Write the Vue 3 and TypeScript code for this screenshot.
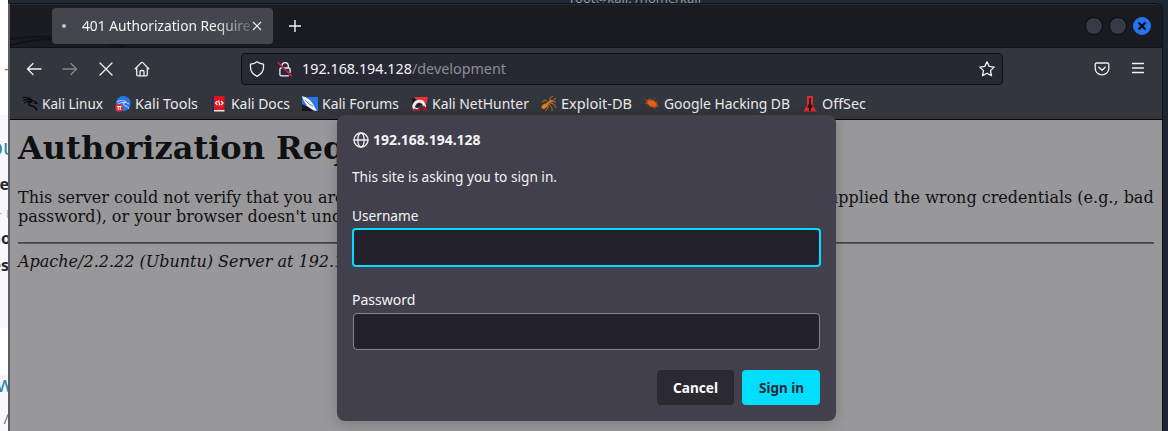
<script setup lang="ts">
interface Bookmark { id: string; label: string; width: number; gap: number }
const bookmarks: Bookmark[] = [
  { id: 'dragon', label: 'Kali Linux', width: 61, gap: 12 },
  { id: 'tools', label: 'Kali Tools', width: 63, gap: 12.5 },
  { id: 'docs', label: 'Kali Docs', width: 59, gap: 12.5 },
  { id: 'forums', label: 'Kali Forums', width: 77, gap: 12.5 },
  { id: 'hunter', label: 'Kali NetHunter', width: 97, gap: 12 },
  { id: 'exploit', label: 'Exploit-DB', width: 71, gap: 12 },
  { id: 'google', label: 'Google Hacking DB', width: 126, gap: 12 },
  { id: 'offsec', label: 'OffSec', width: 44, gap: 0 },
]
const fragments = [
  { text: '‑', top: 58, cls: 'code' },
  { text: 'ou', top: 137, cls: 'link' },
  { text: 'me', top: 174, cls: 'strong' },
  { text: '- r', top: 202, cls: 'pale' },
  { text: 'no', top: 228, cls: 'strong clipped' },
  { text: 'es', top: 255, cls: 'strong' },
  { text: 'w', top: 374, cls: 'link single' },
  { text: '- /', top: 408, cls: 'code' },
]
</script>

<template>
  <div class="desktop">
    <div class="behind">
      <div class="band first"></div>
      <div class="band second"></div>
      <span v-for="f in fragments" :key="f.top" class="frag" :class="f.cls" :style="{ top: f.top + 'px' }">{{ f.text }}</span>
    </div>
    <div class="topline"></div>
    <div class="terminal">root@kali: /home/kali</div>
    <div class="window">
      <header class="tabs">
        <svg class="watermark" width="130" height="40" viewBox="0 0 130 40" fill="none"><path d="M0 32C35 27 73 30 116 40M0 38C25 32 45 31 60 34M45 31l6 6" stroke="#111317" stroke-width="2" /></svg>
        <div class="tab">
          <i class="dot"></i>
          <svg class="tab-title" width="169" height="24"><text x="0" y="17" textLength="177" lengthAdjust="spacingAndGlyphs">401 Authorization Required</text></svg>
          <svg class="tab-close" width="10" height="10" viewBox="0 0 10 10"><path d="M1 1l8 8M9 1L1 9" /></svg>
        </div>
        <svg class="plus" width="12" height="12" viewBox="0 0 12 12"><path d="M6 0v12M0 6h12" /></svg>
        <div class="controls">
          <i></i><i></i>
          <i class="close"><svg width="10" height="10" viewBox="0 0 10 10"><path d="M1.500 1.500l7 7M8.500 1.500l-7 7" /></svg></i>
        </div>
      </header>
      <nav class="toolbar">
        <svg class="ic back" width="16" height="16" viewBox="0 0 16 16"><path d="M15 8H1.500M7 2.500L1.500 8 7 13.500" /></svg>
        <svg class="ic forward" width="16" height="16" viewBox="0 0 16 16"><path d="M1 8h13.500M9 2.500L14.500 8 9 13.500" /></svg>
        <svg class="ic stop" width="16" height="16" viewBox="0 0 16 16"><path d="M2 2l12 12M14 2L2 14" /></svg>
        <svg class="ic home" width="16" height="16" viewBox="0 0 16 16"><path d="M1.200 7.700L7.300 1.600q.7-.6 1.400 0l6.100 6.100M2.700 6.500v7q0 1.300 1.300 1.300h8q1.300 0 1.300-1.300v-7M6 14.800v-4q0-1.300 1.300-1.300h1.400q1.300 0 1.300 1.300v4" /></svg>
        <div class="url">
          <svg class="ic shield" width="16" height="16" viewBox="0 0 16 16"><path d="M8 .8c2 1.500 4.200 2.100 6.500 2.300v3.200c0 4-2.300 7-6.500 9-4.200-2-6.500-5-6.500-9V3.100C3.800 2.900 6 2.300 8 .8z" /></svg>
          <svg class="ic lock" width="16" height="16" viewBox="0 0 16 16"><path d="M5 4.300a3.200 3.200 0 0 1 6.300 0V7M7.500 7h4.300q1.300 0 1.300 1.300v3M11.500 14.800H4.200q-1.300 0-1.300-1.300V8.300Q2.900 7 4.200 7" /><path class="slash" d="M1 1.500l13.500 13.500" /></svg>
          <svg class="address" width="210" height="24"><text x="0" y="17" textLength="204" lengthAdjust="spacingAndGlyphs">192.168.194.128<tspan class="dim">/development</tspan></text></svg>
          <svg class="ic star" width="16" height="16" viewBox="0 0 16 16"><path d="M8 .8l2.200 4.600 5 .7-3.700 3.500 1 5L8 12.200l-4.500 2.400 1-5L.8 6.100l5-.7z" /></svg>
        </div>
        <svg class="ic pocket" width="16" height="16" viewBox="0 0 16 16"><path d="M2.500 2h11q1.300 0 1.300 1.300v4.200a6.800 6.300 0 0 1-13.600 0V3.300Q1.200 2 2.500 2zM4.800 6.300L8 9.300l3.200-3" /></svg>
        <svg class="ic menu" width="14" height="14" viewBox="0 0 14 14"><path d="M1.500 1.500h11M1.500 6h11M1.500 10.500h11" /></svg>
      </nav>
      <nav class="bookmarks">
        <a v-for="b in bookmarks" :key="b.id" :style="{ marginRight: b.gap + 'px' }">
          <svg class="favicon" width="16" height="16" viewBox="0 0 16 16">
            <g v-if="b.id === 'dragon'" fill="none" stroke="#08090b"><path d="M.5 1.500C5 1 8 2 10.500 4.500M1 4.500c3-1.200 6-1 9 .5M2 7c2-1.300 5-2 8-1M10 4.500l4 1.500 1 1.500-3-.5" stroke-width="1.200" /><path d="M10 6C6 5.500 5.500 8 8 9.500c4 .5 6 2 7 5" stroke-width="1.600" /></g>
            <g v-else-if="b.id === 'tools'"><circle cx="8.300" cy="7.500" r="7.400" fill="#2878ed" /><path d="M2 6c3-2 6-2 9 0M3 8c3-1.800 5-1.500 8-1.500M10 6l4 2M10 7c-3 0-2 2.500 1 3 2 .5 2.500 2 2.500 3" fill="none" stroke="#c4dcfb" stroke-width="1" /><circle cx="4.200" cy="11.800" r="4" fill="#e52a32" /><path d="M2 10.500h4.500M3.200 11v3M5.300 11v3" stroke="#fff" /></g>
            <g v-else-if="b.id === 'docs'"><path fill="#252b60" d="M1 0h2v16H1z" /><path fill="#db151b" d="M3 0h10.500v14H3z" /><path fill="#e7e7e9" d="M3 14h10.500v1.500H3z" /><path d="M6.500 5L4.500 7l2 2M10 5l2 2-2 2M7.700 4.500l1 5" fill="none" stroke="#fff" stroke-width="1.200" /></g>
            <g v-else-if="b.id === 'forums'"><path fill="#2678ed" d="M0 1h16v14H0z" /><path fill="#15171b" d="M0 8l6 3 6 4H0z" /><path d="M0 0l3 1 5 3 3 4 4 7-4-1-6-4-3-5z" fill="#f1f1f1" /><path d="M3 4l4 4 4 2" fill="none" stroke="#888" /></g>
            <g v-else-if="b.id === 'hunter'"><path d="M2 1h14l-3 12L6 5z" fill="#ef3138" /><path d="M0 2h3l-2 7z" fill="#111318" /><path d="M7 13c-4 1.500-6-1-5-4 2-5 8-5 9.500-1.500l1.500 4" fill="none" stroke="#ededed" stroke-width="2.800" /><path d="M2 13q3 3 6-.5M11 10l4 5" fill="none" stroke="#b80f35" stroke-width="2.200" /><path d="M5 11q2-4 5-2" fill="none" stroke="#17181b" stroke-width="1.500" /></g>
            <g v-else-if="b.id === 'exploit'" fill="#e5821c" stroke="#d87b21"><ellipse cx="3.500" cy="10" rx="2.800" ry="1.700" transform="rotate(-30 4 10)" /><path d="M5 9l3-2.500 3-2" fill="none" stroke-width="2" /><path d="M8 7L4 4 1 6M9 6V2l3-2M11 5l4-3M9 7l4 1 2 4M8 8l3 4v3M7 8v4l-3 3M11 5.500l4 .5" fill="none" stroke-width=".8" /></g>
            <g v-else-if="b.id === 'google'" fill="#e96010" stroke="#bd5116"><ellipse cx="8" cy="7.500" rx="5.300" ry="2.900" transform="rotate(25 8 7.500)" /><path d="M4 6L1 3M6 5L5 2M9 5l2-3M4 7.500H1M7 10l-2 2M10 11l1 2M12 9.500l3 1M11 7l3-2" stroke-width=".6" /></g>
            <g v-else><path d="M5 0h6v9l3.500 6.500h-13L5 9z" fill="#e52930" /><path d="M7 2h2v6l2 3-2 1v3H7v-3l-2-1 2-3z" fill="#291014" /></g>
          </svg>
          <svg class="label" :width="b.width" height="20"><text x="0" y="15" :textLength="b.width" lengthAdjust="spacingAndGlyphs">{{ b.label }}</text></svg>
        </a>
      </nav>
      <main class="page">
        <h1>Authorization Required</h1>
        <p>This server could not verify that you are authorized to access the document requested. Either you supplied the wrong credentials (e.g., bad password), or your browser doesn't understand how to supply the credentials required.</p>
        <hr />
        <address>Apache/2.2.22 (Ubuntu) Server at 192.168.194.128 Port 80</address>
      </main>
    </div>
    <section class="dialog" role="dialog">
      <div class="host">
        <svg class="ic" width="16" height="16" viewBox="0 0 16 16"><circle cx="8" cy="8" r="7" /><ellipse cx="8" cy="8" rx="3.200" ry="7" /><path d="M1 8h14" /></svg>
        <svg width="108" height="20"><text x="0" y="15" textLength="107.500" lengthAdjust="spacingAndGlyphs">192.168.194.128</text></svg>
      </div>
      <svg class="message" width="206" height="20"><text x="0" y="15" textLength="205" lengthAdjust="spacingAndGlyphs">This site is asking you to sign in.</text></svg>
      <svg class="field-label" width="68" height="20"><text x="0" y="15" textLength="66.500" lengthAdjust="spacingAndGlyphs">Username</text></svg>
      <input class="focused" type="text" aria-label="Username" />
      <svg class="field-label second" width="68" height="20"><text x="0" y="15" textLength="63.500" lengthAdjust="spacingAndGlyphs">Password</text></svg>
      <input type="password" aria-label="Password" />
      <div class="actions">
        <button><svg width="45" height="20"><text x="0" y="15" textLength="45" lengthAdjust="spacingAndGlyphs">Cancel</text></svg></button>
        <button class="primary"><svg width="45" height="20"><text x="0" y="15" textLength="45" lengthAdjust="spacingAndGlyphs">Sign in</text></svg></button>
      </div>
    </section>
  </div>
</template>

<style>
html, body { margin: 0; overflow: hidden; }
</style>
<style scoped>
* { box-sizing: border-box; }
svg { display: block; flex: none; }
text { fill: currentColor; }
.desktop { position: relative; width: 1168px; height: 431px; overflow: hidden; background: #1d2530; font: 15px "Noto Sans", sans-serif; color: #f4f4f6; }
.behind { position: absolute; left: 0; top: 0; width: 8px; height: 431px; overflow: hidden; background: #fff; }
.band { position: absolute; left: 0; width: 8px; background: #f7f7fc; }
.band.first { top: 115px; height: 213px; }
.band.second { top: 352px; height: 79px; }
.frag { position: absolute; right: 0; line-height: 20px; white-space: nowrap; font-size: 15px; }
.link { color: #2d87a4; font-size: 21px; right: -8px; }
.link.single { right: -5px; }
.strong { color: #252833; font-weight: 700; font-size: 16px; right: -1px; }
.strong.clipped { right: -3px; }
.pale { color: #80c9bb; right: -4px; }
.code { color: #9b6b49; right: -1px; }
.topline { position: absolute; left: 10px; top: 0; width: 1158px; height: 3px; background: #1f2935; }
.terminal { position: absolute; left: 570px; top: -9px; color: #9097a0; font-size: 13px; line-height: 15px; }
.window { position: absolute; left: 8px; top: 3px; width: 1155px; height: 440px; background: #34363d; border: 1px solid #101217; border-left: 2px solid #5b5c60; border-radius: 0 7px 0 0; overflow: hidden; }
.tabs { position: relative; height: 44px; background: #191b20; border-bottom: 1px solid #101115; display: flex; align-items: center; border-top: 1px solid #292c31; }
.watermark { position: absolute; left: 0; top: 2px; }
.tab { position: relative; margin-left: 42px; width: 221px; height: 36px; border-radius: 4px; background: #44464e; display: flex; align-items: center; }
.dot { width: 4px; height: 4px; border-radius: 50%; background: #c2c3c6; margin-left: 10px; }
.tab-title { margin-left: 16px; overflow: hidden; mask-image: linear-gradient(90deg, #000 132px, transparent 176px); }
.tab-close { margin-left: 1px; fill: none; stroke: #eee; stroke-width: 1.200; }
.plus { margin-left: 16px; fill: none; stroke: #f3f3f3; stroke-width: 1.400; }
.controls { margin-left: auto; margin-right: 11px; display: flex; gap: 6px; }
.controls i { width: 18px; height: 18px; border-radius: 50%; background: #373b47; border: 1px solid #090a0d; display: grid; place-items: center; }
.controls .close { background: #2674f3; border-color: #2674f3; stroke: #080d18; stroke-width: 2.400; }
.toolbar { height: 41px; display: flex; align-items: center; padding-left: 16px; }
.ic { fill: none; stroke: #f0f0f3; stroke-width: 1.300; stroke-linecap: round; stroke-linejoin: round; }
.forward { margin-left: 20px; stroke: #85868b; }
.stop { margin-left: 20px; }
.home { margin-left: 19.500px; }
.url { margin-left: 91.500px; width: 762px; height: 32px; background: #272833; border: 1px solid #0e0f13; border-radius: 4px; display: flex; align-items: center; padding: 0 7px; }
.lock { margin-left: 12px; }
.slash { stroke: #e91b4b; }
.address { margin-left: 9px; }
.dim { fill: #8d8e95; }
.star { margin-left: auto; }
.pocket { margin-left: 91px; }
.menu { margin-left: 21px; }
.bookmarks { height: 31px; padding-left: 12.400px; display: flex; align-items: center; border-bottom: 1px solid #08090b; }
.bookmarks a { display: flex; align-items: center; gap: 4px; color: #e9e9ea; }
.page { height: 320px; padding: 10px 8px 8px; background: #98989a; color: #101013; font: 16px "DejaVu Serif", serif; line-height: 19px; }
h1 { font-size: 32px; line-height: 37px; margin: 0 0 21px; }
p { margin: 0 0 16px; }
hr { height: 2px; border: 0; border-top: 1px solid #444; border-bottom: 1px solid #5a5a5c; margin: 0 0 8px; }
.dialog { position: absolute; left: 337px; top: 115px; width: 499px; height: 306px; padding: 15px 16px; border-radius: 8px; background: #42404d; box-shadow: 0 2px 14px #0003; }
.host { display: flex; align-items: center; gap: 4px; height: 20px; font-weight: 700; }
.message { margin-top: 17px; margin-left: -.6px; }
.field-label { margin-top: 19px; margin-left: -.6px; }
input { display: block; width: 467px; height: 37px; margin: 3px 0 0; padding: 0 8px; border: 1px solid #85848c; border-radius: 4px; outline: none; background: #23212a; color: #fff; font: inherit; }
.focused { height: 39px; width: 469px; margin: 2px 0 0 -1px; border: 2px solid #00ddff; }
.second { margin-top: 23px; }
.actions { display: flex; justify-content: flex-end; gap: 8px; margin-top: 20px; }
button { width: 77px; height: 35px; padding: 0; border: 0; border-radius: 4px; background: #2b2a33; color: #fbfbfe; font: inherit; font-weight: 700; display: grid; place-items: center; }
.primary { width: 78px; background: #00ddff; color: #2b2a33; }
</style>
